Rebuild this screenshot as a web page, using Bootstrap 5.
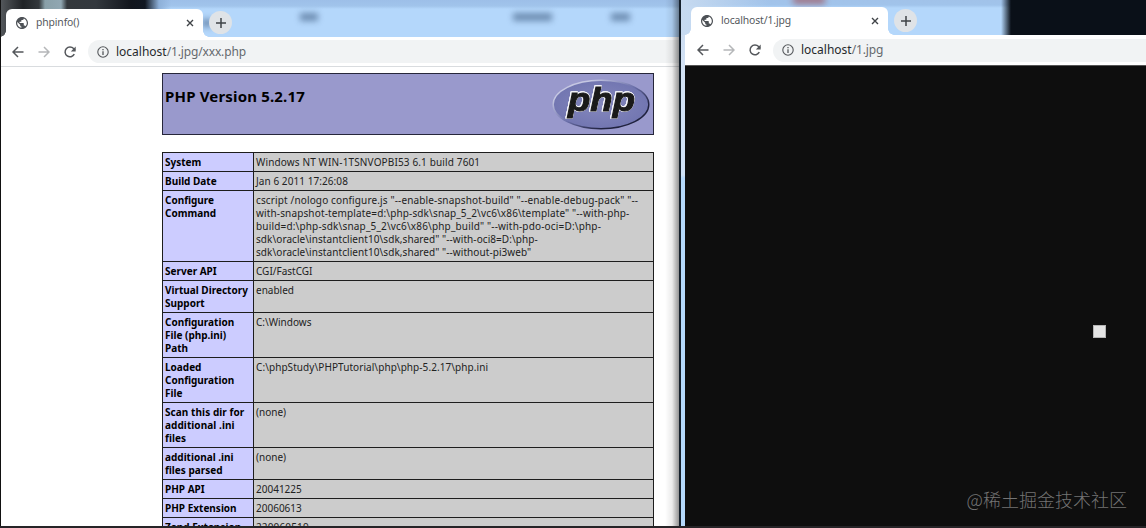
<!DOCTYPE html>
<html lang="en">
<head>
<meta charset="utf-8">
<title>phpinfo()</title>
<link href="https://cdn.jsdelivr.net/npm/bootstrap@5.3.0/dist/css/bootstrap.min.css" rel="stylesheet">
<style>
body{width:1146px;height:528px;background:#262427;font-family:"Noto Sans","Noto Sans CJK SC",sans-serif;color:#000}
.desk{height:526px}
.win-a{width:679px;background:#fff;border-left:1px solid #111}
.win-a::after{content:"";position:absolute;right:0;top:0;width:14px;height:100%;background:linear-gradient(90deg,transparent,rgba(0,0,0,.08) 50%,rgba(0,0,0,.42))}
.win-b{background:linear-gradient(#c5d7ed 0,#d3e2f5 65px,#cfe1f6 175px,#b5d9fc 178px);border-left:2px solid #15202b;padding-left:4px}
.strip-a{height:37px;padding:9px 0 0 5px;background:linear-gradient(90deg,#53575b 0,#202326 22px,#33383c 38px,#89a0a8 44px,#91a7b2 60px,#34383c 66px,#33383e 95px,#12161d 130px,#111822 144px,#8eb0d8 158px,transparent 170px),linear-gradient(#9dbfe8 0,#a1c4eb 6px,#b4d7fb 9px)}
.strip-b{height:35px;padding:7px 0 0 6px;margin-left:-4px;background:linear-gradient(90deg,transparent 320px,#0a1018 330px),linear-gradient(90deg,#c7daf0 0,transparent 90px),linear-gradient(#a1c2e9 0,#a1c4eb 5px,#b4d7fb 8px)}
.strip-b .page-tab{margin-left:4px}
.page-tab{width:197px;height:28px;background:#fff;border-radius:6px 6px 0 0;padding:0 9px 0 10px;font-size:10.4px;color:#55585c;z-index:2}
.page-tab span{letter-spacing:-.13px}
.page-tab::before,.page-tab::after{content:"";position:absolute;bottom:0;width:6px;height:6px}
.page-tab::before{left:-6px;background:radial-gradient(circle at 0 0,transparent 5.5px,#fff 6px)}
.page-tab::after{right:-6px;background:radial-gradient(circle at 100% 0,transparent 5.5px,#fff 6px)}
.plus{width:23px;height:23px;border-radius:50%;background:#dfe3e7;margin:2px 0 0 6px;z-index:2}
.smudge{background:#47658a;filter:blur(3px);opacity:.65;height:8px;top:13px}
.bar{background:#fff}
.bar-a{height:30px;border-bottom:1px solid #d9dcdf;padding:3px 0 3px 11px}
.bar-b{height:30px;padding:3px 0 3px 12px}
.pill{background:#f1f3f4;border-radius:12px 0 0 12px;height:23px;padding-left:9px;font-size:12px;letter-spacing:-.15px;color:#65696e;margin-left:12px}
.pill b{font-weight:400;color:#26292c;letter-spacing:0}
.pill svg{margin-right:7px}
.info{width:492px;margin:6px 0 0 161px}
.head{height:62px;background:#9999cc;border:1px solid #26263a;padding:0 2px}
.head h1{font-size:15px;font-weight:700;line-height:20px;margin:12px 0 0;letter-spacing:.17px}
.facts{margin-top:17px;width:492px;border-collapse:collapse;table-layout:fixed;font-size:10px;line-height:13px}
.facts th,.facts td{border:1px solid #1d1d1d;padding:3px 2px 2px;vertical-align:top;white-space:nowrap}
.facts th{width:91px;background:#ccccff;font-weight:700}
.facts td{background:#cccccc;color:#222}
.w1{letter-spacing:.14px}
.w2{letter-spacing:.17px}
.w3{letter-spacing:.07px}
.logo-word{filter:drop-shadow(.8px 0 0 #f2f2f8) drop-shadow(-.8px 0 0 #f2f2f8) drop-shadow(0 .8px 0 #f2f2f8) drop-shadow(0 -.8px 0 #f2f2f8)}
.view-b{height:461px;background:#0e0e0e;border-top:1px solid #555}
.dot{width:13px;height:13px;background:#e4e4e4;border:1px solid #b4b4b4;left:408px;top:259px}
.mark-text{right:19px;bottom:14px;font:18px/26px "Noto Sans CJK SC",sans-serif;color:#747474;font-weight:300}
</style>
</head>
<body class="overflow-hidden">
<svg class="d-none">
<symbol id="globe" viewBox="2 2 20 20"><path d="M12 2C6.480 2 2 6.480 2 12s4.480 10 10 10 10-4.480 10-10S17.520 2 12 2zm-1 17.930c-3.950-.490-7-3.850-7-7.930 0-.620.080-1.210.210-1.790L9 15v1c0 1.100.900 2 2 2v1.930zm6.900-2.540c-.260-.810-1-1.390-1.900-1.390h-1v-3c0-.550-.450-1-1-1H8v-2h2c.550 0 1-.450 1-1V7h2c1.100 0 2-.900 2-2v-.410c2.930 1.190 5 4.060 5 7.410 0 2.080-.800 3.970-2.100 5.390z" fill="#4d5156"/></symbol>
<symbol id="back" viewBox="0 0 12 12"><path d="M11.500 6H1M6 1L1 6l5 5" fill="none" stroke="currentColor" stroke-width="1.500"/></symbol>
<symbol id="reload" viewBox="0 0 12 12"><path d="M10.300 8.200A4.900 4.900 0 1 1 9.600 2.600L11 4" fill="none" stroke="#54575b" stroke-width="1.500"/><path d="M11.700.500v4.900H6.800z" fill="#54575b"/></symbol>
<symbol id="about" viewBox="0 0 12 12"><circle cx="6" cy="6" r="5.200" fill="none" stroke="#54575b" stroke-width="1.100"/><path d="M6 5.200v3.700M6 2.900v1.300" stroke="#54575b" stroke-width="1.300"/></symbol>
<symbol id="close" viewBox="0 0 8 8"><path d="M1 1l6 6M7 1L1 7" stroke="#3f4347" stroke-width="1.400"/></symbol>
<symbol id="add" viewBox="0 0 10 10"><path d="M5 0v10M0 5h10" stroke="#3f4347" stroke-width="1.500"/></symbol>
</svg>
<main class="desk d-flex">
<section class="win-a position-relative overflow-hidden flex-shrink-0">
  <div class="strip-a d-flex position-relative">
    <i class="smudge position-absolute" style="left:299px;width:18px"></i><i class="smudge position-absolute" style="left:512px;width:39px"></i><i class="smudge position-absolute" style="left:610px;width:19px"></i><i class="smudge position-absolute" style="left:201px;width:10px;top:19px"></i>
    <div class="page-tab d-flex align-items-center position-relative"><svg width="12" height="12"><use href="#globe"/></svg><span class="flex-grow-1" style="margin-left:8px">phpinfo()</span><svg width="8" height="8"><use href="#close"/></svg></div>
    <div class="plus d-flex align-items-center justify-content-center"><svg width="10" height="10"><use href="#add"/></svg></div>
  </div>
  <div class="bar bar-a d-flex align-items-center">
    <svg width="12" height="12" color="#54575b"><use href="#back"/></svg><svg width="12" height="12" color="#b5b7b9" style="margin:0 14px;transform:scaleX(-1)"><use href="#back"/></svg><svg width="12" height="12"><use href="#reload"/></svg>
    <div class="pill d-flex align-items-center flex-grow-1"><svg width="12" height="12"><use href="#about"/></svg><span><b>localhost</b>/1.jpg/xxx.php</span></div>
  </div>
  <div class="info">
    <div class="head d-flex justify-content-between"><h1>PHP Version 5.2.17</h1>
      <svg width="100" height="54" viewBox="0 0 100 54" style="margin-top:4px">
        <defs><linearGradient id="rim" x1="0" y1="0" x2="1" y2="1"><stop offset=".2" stop-color="#c5c7e2"/><stop offset=".5" stop-color="#696ea8"/><stop offset=".75" stop-color="#20223f"/></linearGradient><radialGradient id="oval"><stop offset="0" stop-color="#8588bd"/><stop offset="1" stop-color="#7276b1"/></radialGradient></defs>
        <ellipse cx="50" cy="26.500" rx="47.800" ry="24.300" fill="url(#oval)" stroke="url(#rim)" stroke-width="1.400"/>
        <text class="logo-word" x="17" y="33" font-family="Liberation Sans" font-weight="700" font-style="italic" font-size="33" textLength="67" lengthAdjust="spacingAndGlyphs" fill="#1a1a1a" stroke="#1a1a1a" stroke-width="1">php</text>
      </svg></div>
    <table class="facts">
      <tr><th>System</th><td class="w1">Windows NT WIN-1TSNVOPBI53 6.1 build 7601</td></tr>
      <tr><th>Build Date</th><td class="w3">Jan 6 2011 17:26:08</td></tr>
      <tr><th>Configure<br>Command</th><td><span class="w1">cscript /nologo configure.js "--enable-snapshot-build" "--enable-debug-pack" "--<br>with-snapshot-template=d:\php-sdk\snap_5_2\vc6\x86\template" "--with-php-</span><br><span class="w2">build=d:\php-sdk\snap_5_2\vc6\x86\php_build" "--with-pdo-oci=D:\php-</span><br><span class="w3">sdk\oracle\instantclient10\sdk,shared" "--with-oci8=D:\php-<br>sdk\oracle\instantclient10\sdk,shared" "--without-pi3web"</span></td></tr>
      <tr><th>Server API</th><td>CGI/FastCGI</td></tr>
      <tr><th>Virtual Directory<br>Support</th><td>enabled</td></tr>
      <tr><th>Configuration<br>File (php.ini)<br>Path</th><td>C:\Windows</td></tr>
      <tr><th>Loaded<br>Configuration<br>File</th><td class="w3">C:\phpStudy\PHPTutorial\php\php-5.2.17\php.ini</td></tr>
      <tr><th class="w3">Scan this dir for<br>additional .ini<br>files</th><td>(none)</td></tr>
      <tr><th>additional .ini<br>files parsed</th><td>(none)</td></tr>
      <tr><th>PHP API</th><td>20041225</td></tr>
      <tr><th>PHP Extension</th><td>20060613</td></tr>
      <tr><th>Zend Extension</th><td class="w1">220060519</td></tr>
    </table>
  </div>
</section>
<section class="win-b flex-grow-1 overflow-hidden">
  <div class="strip-b d-flex position-relative">
    <i class="smudge position-absolute" style="left:112px;width:32px;top:-4px;background:#a04a50"></i>
    <div class="page-tab d-flex align-items-center position-relative"><svg width="12" height="12"><use href="#globe"/></svg><span class="flex-grow-1" style="margin-left:8px">localhost/1.jpg</span><svg width="8" height="8"><use href="#close"/></svg></div>
    <div class="plus d-flex align-items-center justify-content-center"><svg width="10" height="10"><use href="#add"/></svg></div>
  </div>
  <div class="bar bar-b d-flex align-items-center">
    <svg width="12" height="12" color="#54575b"><use href="#back"/></svg><svg width="12" height="12" color="#b5b7b9" style="margin:0 14px;transform:scaleX(-1)"><use href="#back"/></svg><svg width="12" height="12"><use href="#reload"/></svg>
    <div class="pill d-flex align-items-center flex-grow-1"><svg width="12" height="12"><use href="#about"/></svg><span><b>localhost</b>/1.jpg</span></div>
  </div>
  <div class="view-b position-relative"><div class="dot position-absolute"></div><div class="mark-text position-absolute text-nowrap">@稀土掘金技术社区</div></div>
</section>
</main>
<script src="https://cdn.jsdelivr.net/npm/bootstrap@5.3.0/dist/js/bootstrap.bundle.min.js"></script>
</body>
</html>
